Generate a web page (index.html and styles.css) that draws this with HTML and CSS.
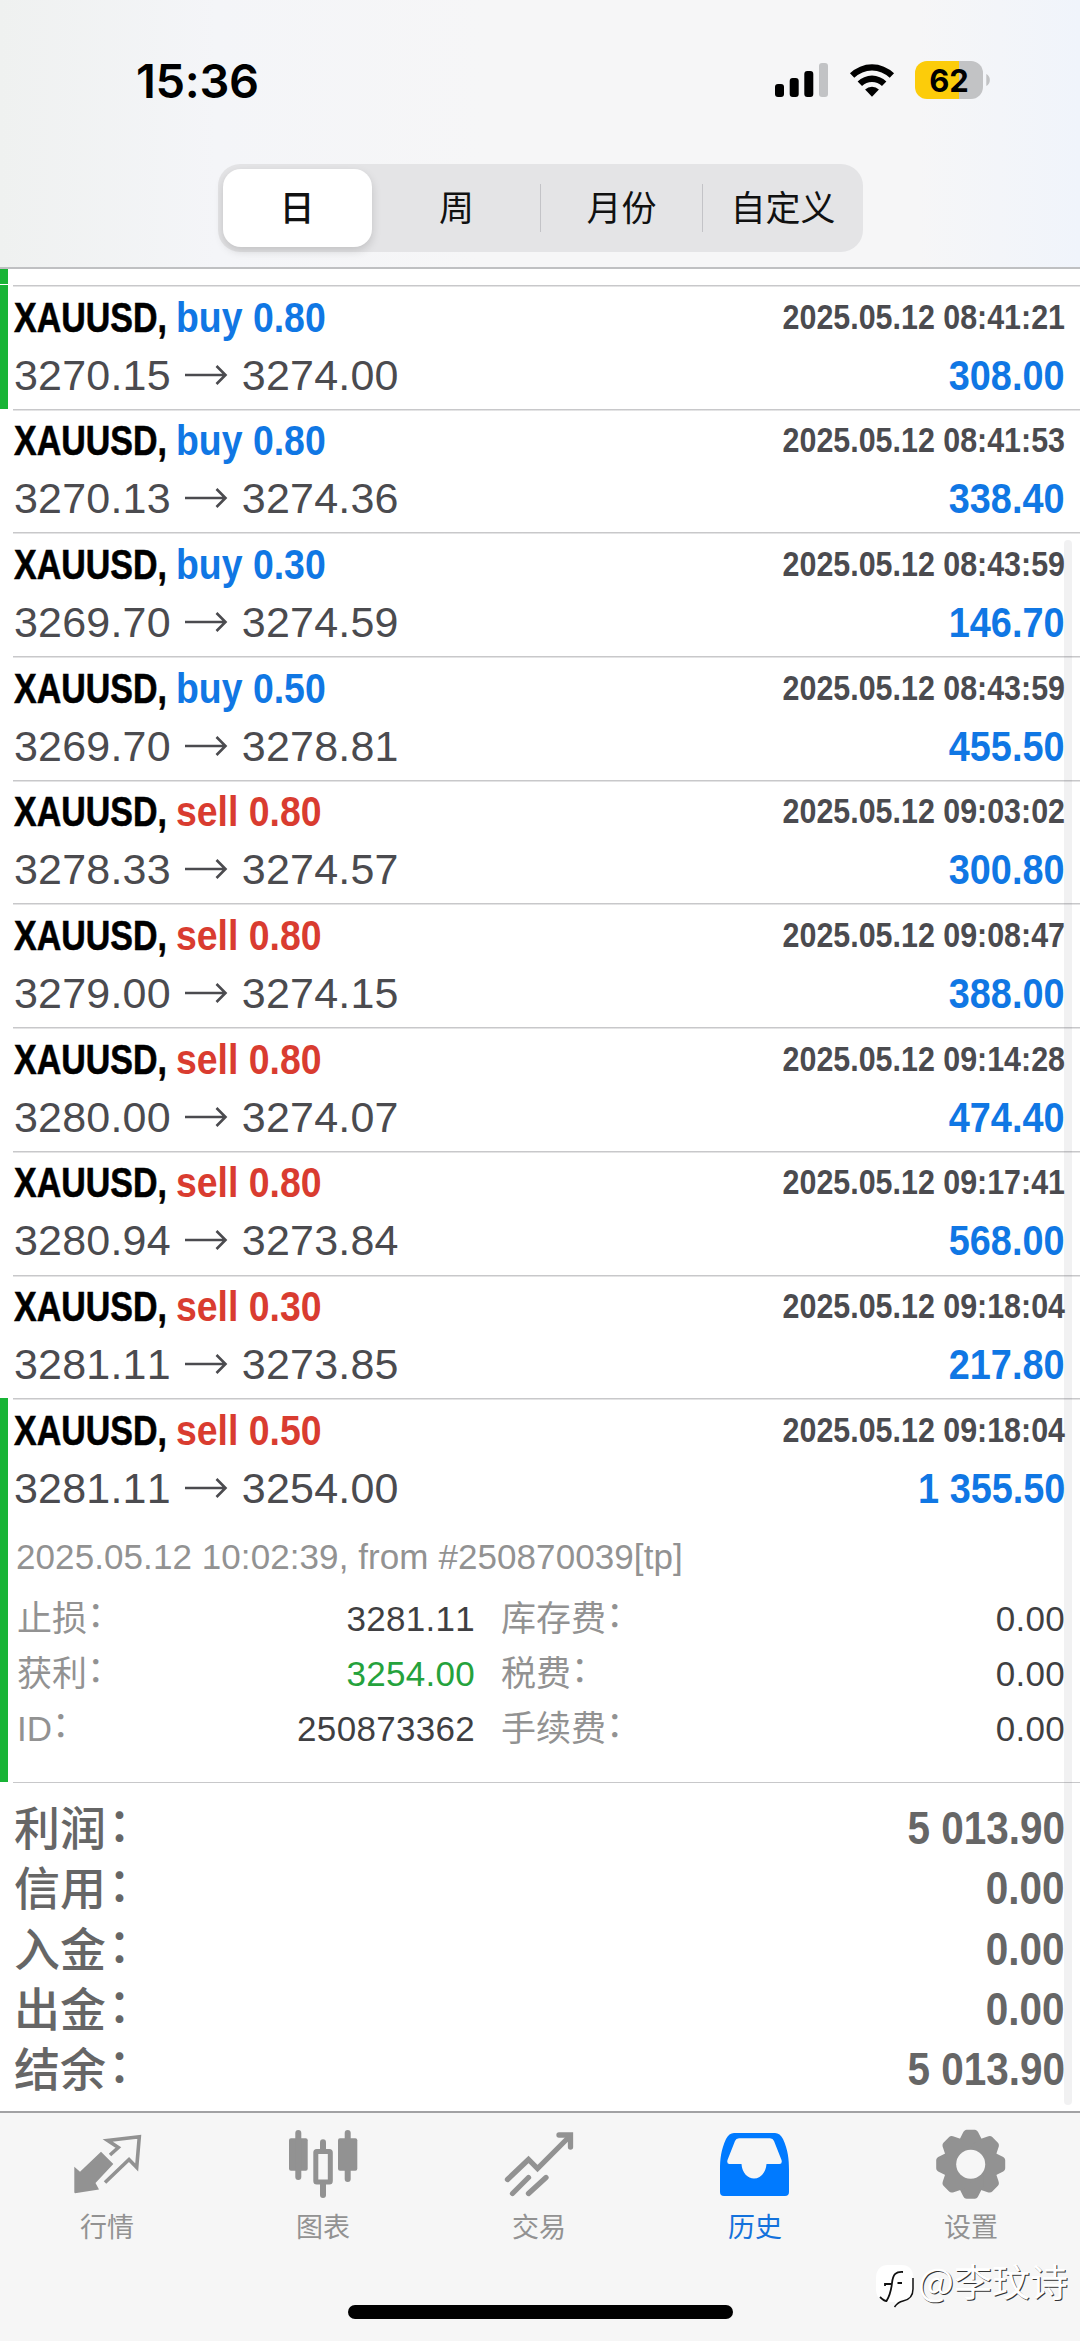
FILE: index.html
```html
<!DOCTYPE html>
<html lang="zh-CN">
<head>
    <meta charset="UTF-8">
    <meta name="viewport" content="width=device-width, initial-scale=1.0">
    <title>历史</title>
    <link rel="stylesheet" href="styles.css">
</head>
<body>
    <header class="header">
        <div class="status">
            <div class="time">15:36</div>
            <div class="status-icons">
                <svg class="signal" width="54" height="36" viewBox="0 0 54 36">
                    <rect x="0" y="21" width="9" height="13" rx="3"/>
                    <rect x="14.700" y="15" width="9" height="19" rx="3"/>
                    <rect x="29.300" y="8" width="9" height="26" rx="3"/>
                    <rect x="44" y="0" width="9" height="34" rx="3" fill="#c2c3c5"/>
                </svg>
                <svg class="wifi" width="46" height="35" viewBox="0 0 48 36">
                    <path d="M1 10.500a33 33 0 0 1 46 0l-4.500 4.700a26.500 26.500 0 0 0-37 0z"/>
                    <path d="M9 19a21.500 21.500 0 0 1 30 0l-4.600 4.700a15 15 0 0 0-20.800 0z"/>
                    <path d="M16.800 27.500a10.300 10.300 0 0 1 14.400 0L24 35z"/>
                </svg>
                <div class="battery"><span>62</span></div>
                <svg class="battery-cap" width="4" height="12" viewBox="0 0 4 14"><path d="M0 0a8 8 0 0 1 0 14z" fill="#c2c3c5"/></svg>
            </div>
        </div>
        <nav class="segments">
            <div class="segment active">日</div>
            <div class="segment">周</div>
            <div class="segment divided">月份</div>
            <div class="segment divided">自定义</div>
        </nav>
    </header>

    <main class="history">
        <div class="partial"></div>
        <div id="deals"></div>
        <section class="details">
            <div class="comment">2025.05.12 10:02:39, from #250870039[tp]</div>
            <div class="detail-grid">
                <span class="name">止损<i>：</i></span><span class="value">3281.11</span>
                <span class="name">库存费<i>：</i></span><span class="value">0.00</span>
                <span class="name">获利<i>：</i></span><span class="value green">3254.00</span>
                <span class="name">税费<i>：</i></span><span class="value">0.00</span>
                <span class="name">ID<i>：</i></span><span class="value">250873362</span>
                <span class="name">手续费<i>：</i></span><span class="value">0.00</span>
            </div>
        </section>
        <section class="totals">
            <div class="total"><span class="name">利润<i>：</i></span><span class="sum">5 013.90</span></div>
            <div class="total"><span class="name">信用<i>：</i></span><span class="sum">0.00</span></div>
            <div class="total"><span class="name">入金<i>：</i></span><span class="sum">0.00</span></div>
            <div class="total"><span class="name">出金<i>：</i></span><span class="sum">0.00</span></div>
            <div class="total"><span class="name">结余<i>：</i></span><span class="sum">5 013.90</span></div>
        </section>
        <div class="scrollbar"></div>
    </main>

    <footer class="tabbar">
        <div class="tabs">
            <div class="tab">
                <svg width="72" height="72" viewBox="0 0 72 72">
                    <path d="M29 18.700 41.300 31 23.500 50 27 56.500 3 60.300Q2.300 60 2.300 59V33.700L8 38.700z" fill="#929292"/>
                    <path d="M38 22 46.300 14.500 35.700 7.500 67.300 3.800 64.700 34.500 57 26.500 33 49.500" fill="none" stroke="#929292" stroke-width="3.600"/>
                </svg>
                <span>行情</span>
            </div>
            <div class="tab">
                <svg width="72" height="72" viewBox="0 0 72 72" fill="#929292">
                    <rect x="1" y="5.300" width="18.700" height="32.500" rx="2"/>
                    <rect x="7.300" y="-3" width="6" height="50" rx="3"/>
                    <rect x="50" y="5.300" width="19.300" height="32.500" rx="2"/>
                    <rect x="56.700" y="-3" width="6" height="52" rx="3"/>
                    <rect x="27.800" y="18.500" width="14.500" height="30.500" rx="1" fill="none" stroke="#929292" stroke-width="5"/>
                    <rect x="32" y="6.300" width="6" height="12" rx="3"/>
                    <rect x="32" y="48" width="6" height="17" rx="3"/>
                </svg>
                <span>图表</span>
            </div>
            <div class="tab">
                <svg width="72" height="72" viewBox="0 0 72 72" fill="none" stroke="#929292" stroke-width="5.300" stroke-linecap="round">
                    <path d="M3.500 46.500 24.500 26.500 33.500 35.500 66 3"/>
                    <path d="M55 2H66.500V14"/>
                    <path d="M8.500 60.500 24.500 44.500M24.500 60.500 42 44.500"/>
                </svg>
                <span>交易</span>
            </div>
            <div class="tab current">
                <svg width="72" height="72" viewBox="0 0 72 72" fill="#007aff">
                    <path fill-rule="evenodd" d="M14 0h41q5 0 8 6c5 11 6 20 6 31v22q0 4-4 4H4q-4 0-4-4V37C0 26 1 17 6 6Q9 0 14 0zM19 5.300Q16 5.300 15 8L7.500 27Q6.500 31 9.500 31H21.500C22 40 28 45.500 34 45.500S46 40 46.500 31H59.500Q62.500 31 61.500 27L54 8Q53 5.300 50 5.300z"/>
                </svg>
                <span>历史</span>
            </div>
            <div class="tab">
                <svg width="72" height="72" viewBox="-34.700 -31.300 72 72">
                    <g fill="#929292">
                        <path id="tooth" d="M-12.500-22-8-31Q-6.500-34.500-4-34.500H4Q6.500-34.500 8-31L12.500-22V0h-25z"/>
                        <use href="#tooth" transform="rotate(45)"/>
                        <use href="#tooth" transform="rotate(90)"/>
                        <use href="#tooth" transform="rotate(135)"/>
                        <use href="#tooth" transform="rotate(180)"/>
                        <use href="#tooth" transform="rotate(225)"/>
                        <use href="#tooth" transform="rotate(270)"/>
                        <use href="#tooth" transform="rotate(315)"/>
                    </g>
                    <circle r="14.500" fill="#f6f6f6"/>
                </svg>
                <span>设置</span>
            </div>
        </div>
        <div class="home-indicator"></div>
    </footer>

    <div class="watermark">
        <svg width="42" height="46" viewBox="0 0 42 46">
            <path d="M12 1H25Q37 1 37 13V25Q37 36 27 37L19 43V38H12Q1 38 0 26V13Q1 1 12 1z" fill="#fff"/>
            <path d="M37 14V25Q37 35 27 37Q22 38 18.500 43" fill="none" stroke="#111" stroke-width="1.500"/>
            <path d="M27 8C20 7.500 17 10 16 19M9 22V20H16M21.500 19H26M16 19C15 28 13 33 10.500 37Q8 37 4 33" fill="none" stroke="#111" stroke-width="1.800"/>
        </svg>
        <span>@李玟诗</span>
    </div>

    <script>
        const deals = [
            ["buy", "0.80", "3270.15", "3274.00", "08:41:21", "308.00", true],
            ["buy", "0.80", "3270.13", "3274.36", "08:41:53", "338.40"],
            ["buy", "0.30", "3269.70", "3274.59", "08:43:59", "146.70"],
            ["buy", "0.50", "3269.70", "3278.81", "08:43:59", "455.50"],
            ["sell", "0.80", "3278.33", "3274.57", "09:03:02", "300.80"],
            ["sell", "0.80", "3279.00", "3274.15", "09:08:47", "388.00"],
            ["sell", "0.80", "3280.00", "3274.07", "09:14:28", "474.40"],
            ["sell", "0.80", "3280.94", "3273.84", "09:17:41", "568.00"],
            ["sell", "0.30", "3281.11", "3273.85", "09:18:04", "217.80"],
            ["sell", "0.50", "3281.11", "3254.00", "09:18:04", "1 355.50", true]
        ];

        document.getElementById("deals").innerHTML = deals.map(([side, volume, open, close, time, profit, marked]) => `
            <div class="deal${marked ? " marked" : ""}">
                <div class="row">
                    <div class="symbol"><span class="ticker">XAUUSD,</span><span class="${side}">${side} ${volume}</span></div>
                    <div class="date">2025.05.12 ${time}</div>
                </div>
                <div class="row">
                    <div class="price">
                        <span>${open}</span>
                        <svg width="42" height="20" viewBox="0 0 42 20"><path d="M0 10H40M31.500 1 40.500 10 31.500 19" fill="none" stroke="#4b4b4f" stroke-width="2.600"/></svg>
                        <span>${close}</span>
                    </div>
                    <div class="profit">${profit}</div>
                </div>
            </div>`).join("");
    </script>
</body>
</html>
```
FILE: styles.css
```css
* {
    box-sizing: border-box;
}
body {
    margin: 0;
    width: 1080px;
    height: 2341px;
    position: relative;
    overflow: hidden;
    display: flex;
    flex-direction: column;
    background: #fff;
    font-family: "Liberation Sans", "Noto Sans CJK SC", sans-serif;
    font-kerning: none;
}
svg {
    display: block;
    overflow: visible;
}
i {
    font-style: normal;
    position: relative;
    left: 0;
    top: -4px;
}

/* header */
.header {
    height: 269px;
    border-bottom: 2px solid #bfc0c2;
    background: linear-gradient(90deg, #eff1f0 0, #f4f5f8 20%, #f6f6f7 45%, #f6f6f7 85%, #f0f4fb 100%);
}
.status {
    height: 164px;
    padding: 61px 90px 0 136px;
    display: flex;
    justify-content: space-between;
}
.time {
    font: 600 47px/40px Inter, sans-serif;
    letter-spacing: -0.300px;
}
.status-icons {
    display: flex;
    align-items: flex-start;
}
.signal {
    margin: 2px 20px 0 0;
}
.wifi {
    margin: 2px 20px 0 0;
}
.battery {
    width: 68px;
    height: 38px;
    border-radius: 12px;
    background: linear-gradient(90deg, #fccc0a 64%, #c2c3c5 64%);
    font: 700 31px/39px Inter, sans-serif;
    text-align: center;
}
.battery-cap {
    margin: 13px 0 0 3px;
}
.segments {
    width: 645px;
    height: 88px;
    margin: 0 auto;
    padding: 5px 0 5px 5px;
    display: grid;
    grid-template-columns: 149px 168px 162px 161px;
    border-radius: 22px;
    background: #e4e4e6;
}
.segment {
    display: flex;
    align-items: center;
    justify-content: center;
    padding: 0 0 5px 2px;
    font: 400 35px "Noto Sans CJK SC", sans-serif;
    color: #111;
    position: relative;
}
.segment.active {
    padding-left: 0;
    border-radius: 18px;
    background: #fff;
    box-shadow: 0 4px 10px rgba(0, 0, 0, 0.15);
    font-weight: 500;
}
.divided::before {
    content: "";
    position: absolute;
    left: 0;
    top: 15px;
    width: 1px;
    height: 48px;
    background: #c3c3c7;
}

/* deals */
.history {
    height: 1842px;
    position: relative;
}
.partial {
    height: 15px;
    margin-bottom: 1px;
    border-left: 8px solid #18b436;
}
.deal {
    height: 123.700px;
    border-left: 8px solid transparent;
    padding: 11.500px 15px 0 6px;
    background: linear-gradient(#c8c8ca, #c8c8ca) 5px 0 / 100% 1.500px no-repeat;
}
.marked {
    border-left-color: #18b436;
}
.row {
    display: flex;
    justify-content: space-between;
    height: 58px;
    line-height: 40px;
}

/* condensed bold */
.symbol, .date, .profit, .sum {
    font-weight: 700;
    white-space: pre;
}
.symbol {
    display: flex;
    font-size: 43px;
}
.symbol span {
    transform: scaleX(0.870);
    transform-origin: left;
}
.symbol .ticker {
    width: 162px;
    transform: scaleX(0.790);
    -webkit-text-stroke: 0.600px #000;
}
.date {
    font-size: 35px;
    color: #4b4b4f;
    transform: scaleX(0.869);
    transform-origin: right;
}
.profit {
    font-size: 43px;
    color: #1077e4;
    transform: scaleX(0.880);
    transform-origin: right;
}
.buy {
    color: #1077e4;
}
.sell {
    color: #d93c30;
}
.price {
    display: flex;
    align-items: center;
    height: 40px;
    gap: 14.500px;
    font-size: 43px;
    letter-spacing: 0.200px;
    color: #4b4b4f;
}

/* expanded deal */
.details {
    height: 260px;
    border-left: 8px solid #18b436;
    padding: 15px 15px 0 8px;
    font-size: 35px;
    color: #929292;
}
.comment {
    height: 62px;
    line-height: 40px;
    letter-spacing: 0.080px;
}
.detail-grid {
    display: grid;
    grid-template-columns: 110px 348px 150px 1fr;
    grid-auto-rows: 55px;
    line-height: 40px;
    padding-left: 1px;
}
.detail-grid .name {
    white-space: nowrap;
    line-height: 40px;
}
.detail-grid .value {
    text-align: right;
    color: #3f3f42;
    letter-spacing: 0.300px;
}
.detail-grid .name:nth-child(4n + 3) {
    padding-left: 26px;
}
.detail-grid .green {
    color: #25a23c;
}

/* totals */
.totals {
    margin-left: 13px;
    padding: 15px 15px 0 1px;
    border-top: 1px solid #c8c8ca;
    color: #666;
}
.total {
    display: flex;
    justify-content: space-between;
    height: 60.400px;
    line-height: 60px;
    font-size: 46px;
}
.total .name {
    line-height: 54px;
    font-family: "Noto Sans CJK SC", sans-serif;
    font-weight: 500;
}
.total i {
    left: 2px;
}
.total .sum {
    transform: scaleX(0.880);
    transform-origin: right;
}
.scrollbar {
    position: absolute;
    left: 1064px;
    top: 271px;
    width: 8px;
    height: 1565px;
    border-radius: 4px;
    background: rgba(120, 120, 130, 0.100);
}

/* tab bar */
.tabbar {
    flex: 1;
    border-top: 2px solid #a2a2a4;
    background: #f6f6f6;
}
.tabs {
    display: grid;
    grid-template-columns: repeat(5, 216px);
    height: 192px;
    padding-top: 20px;
}
.tab {
    display: flex;
    flex-direction: column;
    align-items: center;
    font: 400 27px/40px "Noto Sans CJK SC", sans-serif;
    color: #929292;
}
.tab span {
    margin: 1px 2px 0 0;
}
.current {
    color: #1472dc;
}
.home-indicator {
    width: 385px;
    height: 14px;
    margin: 0 auto;
    border-radius: 7px;
    background: #000;
}
.watermark {
    position: absolute;
    left: 876px;
    top: 2250px;
    display: flex;
    align-items: center;
    font: 400 38px/48px "Noto Sans CJK SC", sans-serif;
    color: #fff;
    text-shadow: 1px 1px 0 #333;
}
.watermark svg {
    margin-top: 14px;
}
```
